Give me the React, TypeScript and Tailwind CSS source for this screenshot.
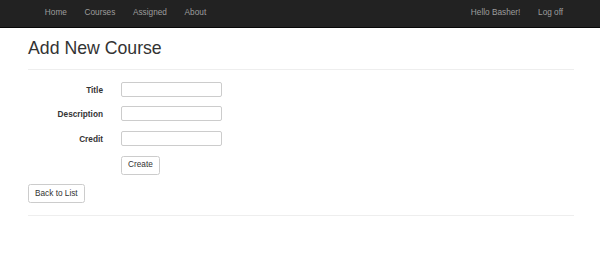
import React from 'react';

const navLinks = ['Home', 'Courses', 'Assigned', 'About'];

function Field({ label }: { label: string }) {
  return (
    <div className="flex items-start h-[15px]">
      <label className="w-[75px] pt-[3px] leading-[12px] text-right font-bold text-[8.25px] text-[#333]">{label}</label>
      <input
        type="text"
        className="ml-[18px] w-[101px] h-[15px] border border-[#ccc] rounded-[2px] bg-white outline-none"
      />
    </div>
  );
}

export default function App() {
  return (
    <div className="w-[600px] h-[277px] bg-white font-['Liberation_Sans',Arial,sans-serif] text-[#333] overflow-hidden">
      {/* Navbar */}
      <nav className="h-[28px] bg-[#222] border-b border-[#080808]">
        <div className="mx-[28px] h-full flex items-center justify-between text-[8.25px] text-[#9d9d9d]">
          <div className="flex ml-[8px]">
            {navLinks.map((l) => (
              <a key={l} className="px-[8.85px]">{l}</a>
            ))}
          </div>
          <div className="flex">
            <a className="px-[8.85px]">Hello Basher!</a>
            <a className="px-[8.85px]">Log off</a>
          </div>
        </div>
      </nav>

      <div className="mx-[28px]">
        <h2 className="mt-[11px] text-[17.7px] leading-[1.1] font-normal text-[#333]">Add New Course</h2>
        <hr className="mt-[10.5px] mr-[-2px] border-t border-[#eee]" />

        {/* Form */}
        <div className="mt-[12px] flex flex-col gap-[9.5px]">
          <Field label="Title" />
          <Field label="Description" />
          <Field label="Credit" />
        </div>
        <div className="mt-[10px] ml-[93px] flex">
          <button className="h-[19px] px-[6px] border border-[#ccc] rounded-[2.5px] bg-white text-[8.25px] leading-none text-[#333]">
            Create
          </button>
        </div>

        <div className="mt-[9px] flex">
          <button className="h-[19.5px] px-[6px] border border-[#ccc] rounded-[2.5px] bg-white text-[8.25px] leading-none text-[#333]">
            Back to List
          </button>
        </div>
        <hr className="mt-[12px] mr-[-2px] border-t border-[#eee]" />
      </div>
    </div>
  );
}
